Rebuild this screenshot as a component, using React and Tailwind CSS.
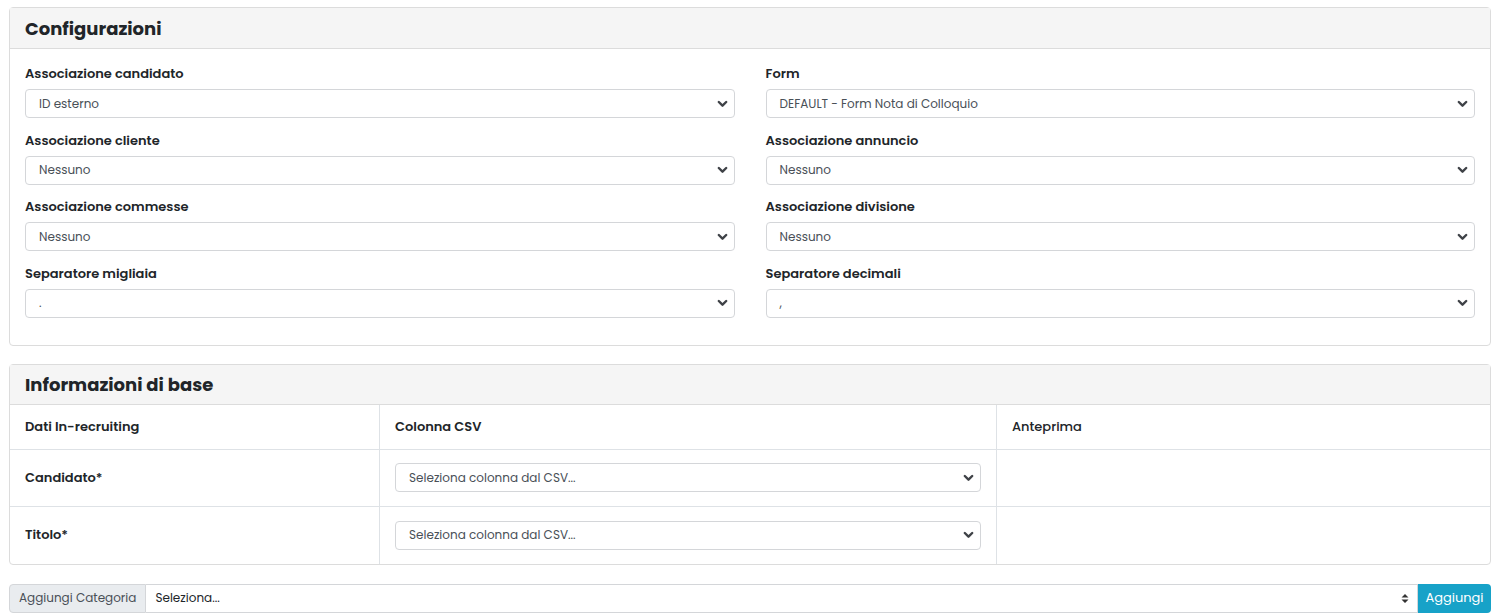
import React from "react";

const Chevron = () => (
  <svg width="11" height="8" viewBox="0 0 11 8" className="shrink-0">
    <path d="M1.8 2 L5.5 5.7 L9.2 2" fill="none" stroke="#3f4247" strokeWidth="2.4" strokeLinecap="round" strokeLinejoin="round" />
  </svg>
);

const SelectBox = ({ value, className = "" }) => (
  <div className={`flex h-[29px] items-center justify-between rounded-[4px] border border-[#d4d6d9] bg-white pl-[13px] pr-[6px] ${className}`}>
    <span className="text-[12px] text-[#495057]">{value}</span>
    <Chevron />
  </div>
);

const Field = ({ label, value }) => (
  <div className="flex flex-col">
    <label className="mb-[5px] text-[13px] font-semibold leading-[20px] text-[#212529]">{label}</label>
    <SelectBox value={value} />
  </div>
);

const fields = [
  ["Associazione candidato", "ID esterno"],
  ["Form", "DEFAULT - Form Nota di Colloquio"],
  ["Associazione cliente", "Nessuno"],
  ["Associazione annuncio", "Nessuno"],
  ["Associazione commesse", "Nessuno"],
  ["Associazione divisione", "Nessuno"],
  ["Separatore migliaia", "."],
  ["Separatore decimali", ","],
];

const rows = ["Candidato*", "Titolo*"];

export default function App() {
  return (
    <div className="min-h-[614px] bg-white pl-[9px] pr-[19px] pt-[7px] text-[#212529]" style={{ fontFamily: "Poppins, 'Open Sans', 'Noto Sans', sans-serif" }}>
      <div className="rounded-[4px] border border-[#dcdcdc]">
        <div className="flex h-[41px] items-center border-b border-[#dcdcdc] bg-[#f5f5f5] px-[15px]">
          <h2 className="text-[18px] font-bold text-[#212529]">Configurazioni</h2>
        </div>
        <div className="grid grid-cols-2 gap-x-[31px] gap-y-[12.5px] px-[15px] pt-[15px] pb-[27px]">
          {fields.map(([l, v]) => (
            <Field key={l} label={l} value={v} />
          ))}
        </div>
      </div>

      <div className="mt-[18px] rounded-[4px] border border-[#dcdcdc]">
        <div className="flex h-[40px] items-center border-b border-[#dcdcdc] bg-[#f5f5f5] px-[15px]">
          <h2 className="text-[18px] font-bold text-[#212529]">Informazioni di base</h2>
        </div>
        <div className="grid grid-cols-[370px_617px_1fr]">
          <div className="flex h-[45px] items-center border-r border-b border-[#dee2e6] px-[15px] text-[13px] font-semibold">Dati In-recruiting</div>
          <div className="flex h-[45px] items-center border-r border-b border-[#dee2e6] px-[15px] text-[13px] font-semibold">Colonna CSV</div>
          <div className="flex h-[45px] items-center border-b border-[#dee2e6] px-[15px] text-[13px] font-medium">Anteprima</div>
          {rows.map((r, i) => (
            <React.Fragment key={r}>
              <div className={`flex h-[57px] items-center border-r border-[#dee2e6] px-[15px] text-[13px] font-semibold ${i === 0 ? "border-b" : ""}`}>{r}</div>
              <div className={`flex h-[57px] items-center border-r border-[#dee2e6] px-[15px] ${i === 0 ? "border-b" : ""}`}>
                <SelectBox value="Seleziona colonna dal CSV..." className="w-full" />
              </div>
              <div className={`h-[57px] border-[#dee2e6] ${i === 0 ? "border-b" : ""}`} />
            </React.Fragment>
          ))}
        </div>
      </div>

      <div className="mt-[19px] flex h-[29px]">
        <div className="flex items-center rounded-l-[4px] border border-[#d4d6d9] bg-[#e9ecef] px-[9px] text-[12px] text-[#495057]">Aggiungi Categoria</div>
        <div className="flex flex-1 items-center justify-between border-y border-r border-[#d4d6d9] bg-white pl-[9px] pr-[8px] text-[12px] text-[#212529]">
          <span>Seleziona...</span>
          <svg width="8" height="11" viewBox="0 0 8 11">
            <path d="M0.5 4.5 L4 1 L7.5 4.5 Z M0.5 6.5 L4 10 L7.5 6.5 Z" fill="#333" />
          </svg>
        </div>
        <button className="flex w-[73px] items-center justify-center rounded-r-[4px] bg-[#17a2c8] text-[13px] text-white">Aggiungi</button>
      </div>
    </div>
  );
}
